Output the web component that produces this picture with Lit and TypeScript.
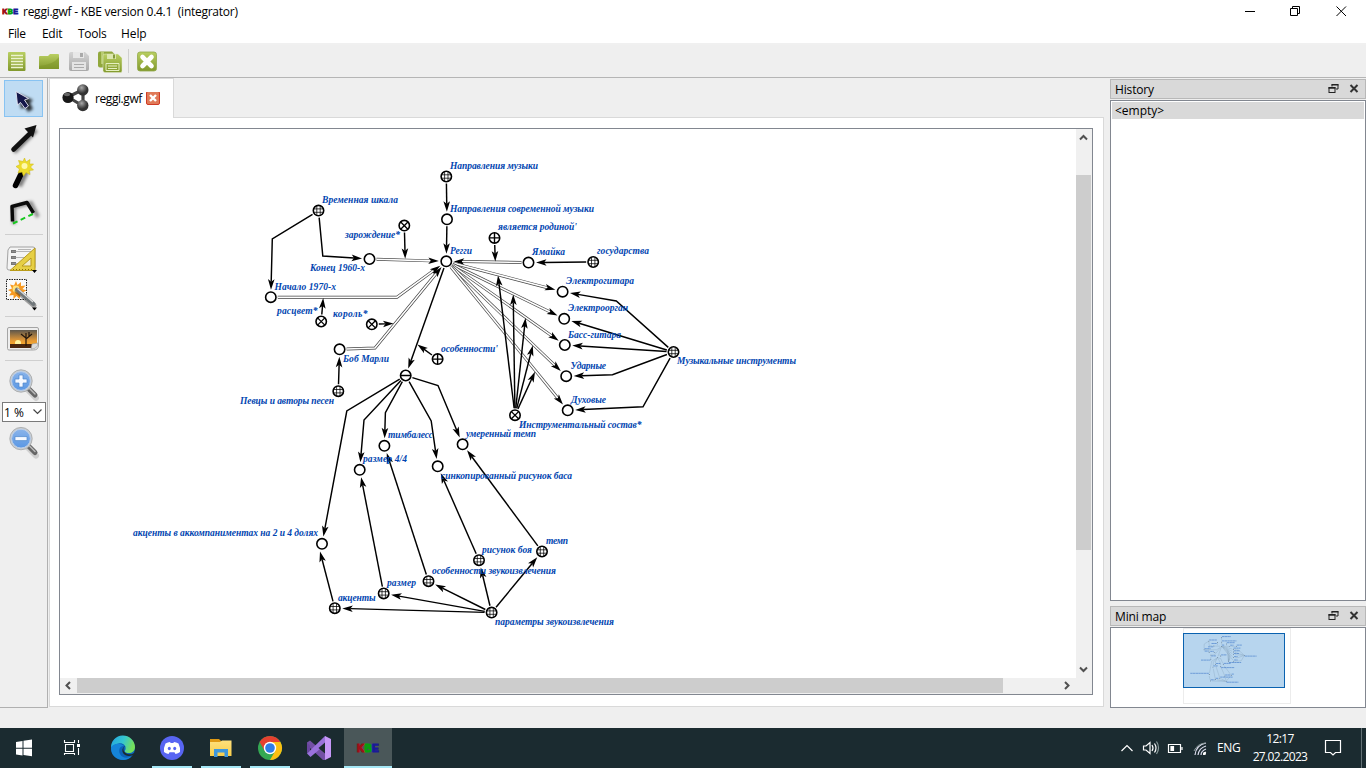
import { LitElement, html, svg, css } from "lit";
import { customElement } from "lit/decorators.js";

type Kind = "plain" | "grid" | "cross" | "plus" | "minus";
type Pt = [number, number];

const nodes: Record<string, [number, number, Kind]> = {
  dir: [446.3, 176.5, "grid"],
  modern: [447, 219.3, "plain"],
  reggae: [446.3, 261.3, "plain"],
  scale: [318.5, 210.6, "grid"],
  birth: [404.3, 225.6, "cross"],
  end60: [369.5, 259, "plain"],
  start70: [270.8, 297.2, "plain"],
  bloom: [321.2, 321.5, "cross"],
  king: [371.8, 324.3, "cross"],
  marley: [339.6, 349.3, "plain"],
  singers: [338.3, 391.2, "grid"],
  homeland: [494.5, 237.9, "plus"],
  jamaica: [528.5, 262.6, "plain"],
  states: [593.2, 262, "grid"],
  guitar: [562.6, 291.7, "plain"],
  organ: [564.2, 318.8, "plain"],
  bass: [564.8, 345, "plain"],
  drums: [566.2, 376.2, "plain"],
  winds: [567.7, 410.3, "plain"],
  instruments: [673.5, 352, "grid"],
  set: [515, 415.2, "cross"],
  features: [437.6, 359.1, "plus"],
  tuple: [405.7, 375.5, "minus"],
  timbales: [384.4, 445.8, "plain"],
  size44: [359.7, 469.8, "plain"],
  tempoMid: [462.6, 444.3, "plain"],
  synco: [437.7, 466.3, "plain"],
  accents24: [322, 543.8, "plain"],
  accents: [334.8, 608.2, "grid"],
  size: [383.7, 593.4, "grid"],
  sound: [428.5, 581.2, "grid"],
  beat: [479, 560.2, "grid"],
  tempo: [542, 551.5, "grid"],
  params: [491.6, 612.6, "grid"],
};

type Edge = [string, string | Pt, Pt[]?];
const edges: Edge[] = [
  ["dir", "modern"],
  ["modern", "reggae"],
  ["scale", "start70", [[272.3, 239]]],
  ["scale", "end60", [[322.8, 256]]],
  ["birth", [405.2, 258.8]],
  ["bloom", [323.2, 298]],
  ["king", [393.5, 323.6]],
  ["singers", "marley"],
  ["homeland", [495.3, 261.6]],
  ["states", "jamaica"],
  ["reggae", "tuple"],
  ["features", [417.4, 344.5]],
  ["set", [498, 275.5]],
  ["set", [513.2, 294.5]],
  ["set", [525.5, 318]],
  ["set", [532.8, 345.5]],
  ["set", [535, 371.8]],
  ["instruments", "guitar", [[616.3, 301]]],
  ["instruments", "organ"],
  ["instruments", "bass"],
  ["instruments", "drums", [[612.5, 374.8]]],
  ["instruments", "winds", [[643, 406.8]]],
  ["tuple", "accents24", [[346.8, 411]]],
  ["tuple", "size44", [[364, 420]]],
  ["tuple", "timbales", [[385.4, 412.6]]],
  ["tuple", "synco", [[431.2, 421]]],
  ["tuple", "tempoMid", [[438, 385.5]]],
  ["accents", [320, 551.5]],
  ["size", "size44"],
  ["sound", "timbales"],
  ["beat", "synco"],
  ["tempo", "tempoMid"],
  ["params", "accents"],
  ["params", "size"],
  ["params", "sound"],
  ["params", "beat"],
  ["params", "tempo"],
];
const doubleEdges: Edge[] = [
  ["end60", "reggae"],
  ["start70", "reggae", [[397, 297.2]]],
  ["marley", "reggae", [[375, 348]]],
  ["jamaica", "reggae"],
  ["reggae", "guitar"],
  ["reggae", "organ"],
  ["reggae", "bass"],
  ["reggae", "drums"],
  ["reggae", "winds"],
];

const labels: [string, number, number, number][] = [
  ["Направления музыки", 450, 538, 169],
  ["Направления современной музыки", 450, 594, 212],
  ["Временная шкала", 322, 398, 203],
  ["зарождение*", 345, 400, 238],
  ["является родиной'", 498, 577, 230],
  ["Регги", 450, 472, 254],
  ["Ямайка", 532, 565, 255],
  ["государства", 597, 649, 254],
  ["Конец 1960-х", 310, 365, 271],
  ["Начало 1970-х", 274.5, 336, 290],
  ["расцвет*", 277, 317.5, 314],
  ["король*", 333, 367.5, 317],
  ["Боб Марли", 343, 389, 362],
  ["особенности'", 441, 498, 352],
  ["Певцы и авторы песен", 240, 334, 404],
  ["Электрогитара", 566, 634, 284],
  ["Электроорган", 568, 628, 311],
  ["Басс-гитара", 568, 621, 338],
  ["Ударные", 570.5, 606, 369],
  ["Духовые", 571, 606, 403],
  ["Музыкальные инструменты", 677, 796, 364],
  ["Инструментальный состав*", 519, 641.5, 428],
  ["умеренный темп", 466, 536, 437],
  ["тимбалесс", 388, 433, 438],
  ["размер 4/4", 363, 407, 462],
  ["синкопированный рисунок баса", 441, 572, 479],
  ["акценты в аккомпаниментах на 2 и 4 долях", 133, 318, 536],
  ["рисунок боя", 482, 532, 553],
  ["темп", 546, 568, 544],
  ["особенности звукоизвлечения", 432, 556, 574],
  ["размер", 387, 416, 586],
  ["акценты", 338, 375.5, 601],
  ["параметры звукоизвлечения", 495, 614, 625],
];

const toward = (a: Pt, b: Pt, d: number): Pt => {
  const l = Math.hypot(b[0] - a[0], b[1] - a[1]) || 1;
  return [a[0] + ((b[0] - a[0]) * d) / l, a[1] + ((b[1] - a[1]) * d) / l];
};
const str = (p: Pt[]) => p.map((q) => q.map((v) => v.toFixed(2)).join(",")).join(" ");

function route([from, to, bends = []]: Edge) {
  const s: Pt = [nodes[from][0], nodes[from][1]];
  const e: Pt = typeof to === "string" ? [nodes[to][0], nodes[to][1]] : to;
  const all: Pt[] = [s, ...bends, e];
  const n = all.length;
  const tip = toward(e, all[n - 2], typeof to === "string" ? 7.5 : 0);
  const base = toward(tip, all[n - 2], 8);
  const back = toward(tip, all[n - 2], 10.5);
  const dx = (back[0] - tip[0]) / 10.5;
  const dy = (back[1] - tip[1]) / 10.5;
  const w = 3.3;
  const arrow: Pt[] = [tip, [back[0] - dy * w, back[1] + dx * w], base, [back[0] + dy * w, back[1] - dx * w]];
  const line: Pt[] = [toward(s, all[1], 7), ...bends, base];
  return { line: str(line), arrow: str(arrow) };
}

const drawNode = ([x, y, k]: [number, number, Kind]) => svg`
  <g transform="translate(${x} ${y})" stroke="#000" fill="none">
    <circle r="5.2" fill="#fff" stroke-width="1.6"></circle>
    ${k === "grid" ? svg`<path d="M-1.700-5V5M1.700-5V5M-5-1.700H5M-5 1.700H5" stroke-width=".75"></path>` : null}
    ${k === "cross" ? svg`<path d="M-3.600-3.600 3.600 3.600M3.600-3.600-3.600 3.600" stroke-width="1.3"></path>` : null}
    ${k === "plus" ? svg`<path d="M0-5V5M-5 0H5" stroke-width="1.4"></path>` : null}
    ${k === "minus" ? svg`<path d="M-5 0H5" stroke-width="1.5"></path>` : null}
  </g>`;

const icon = (x: number, y: number, w: number, h: number, body: unknown) =>
  html`<svg width=${w} height=${h} viewBox="${x} ${y} ${w} ${h}">${body}</svg>`;

const magnifier = (y: number, plus: boolean) => svg`
  <g transform="translate(0 ${y})">
    <path d="M27 21 36 30" stroke="#0002" stroke-width="6" stroke-linecap="round"></path>
    <path d="M28 20 35 27" stroke="#666" stroke-width="5" stroke-linecap="round"></path>
    <path d="M29 20 35 26" stroke="#bbb" stroke-width="1.4" stroke-linecap="round"></path>
    <circle cx="21" cy="13" r="11.2" fill="#c9cdd0" stroke="#a3a6a8" stroke-width=".8"></circle>
    <circle cx="21" cy="13" r="9.4" fill="url(#lens)" stroke="#b9cdea" stroke-width="1"></circle>
    <path d=${plus ? "M19 7h4v4h4v4h-4v4h-4v-4h-4v-4h4z" : "M15 11h12v4h-12z"} fill="#f4f8ff" stroke="#4d86cc" stroke-width=".7"></path>
  </g>`;

const kbe = (x: number, y: number) => svg`
  <g font-family="Liberation Sans, sans-serif" font-weight="700" font-size="10" stroke-width="1.2">
    <text x=${x} y=${y} fill="#a01018" stroke="#a01018" textLength="7">K</text>
    <text x=${x + 7.5} y=${y} fill="#08a010" stroke="#08a010" textLength="7">B</text>
    <text x=${x + 15} y=${y} fill="#1a1a98" stroke="#1a1a98" textLength="6">E</text>
  </g>`;

const dockIcons = () => icon(0, 0, 34, 12, svg`
  <path d="M4 3.500V1.500h6v4.500H8" fill="none" stroke="#222"></path><path d="M3.500 1.750h7" stroke="#222" stroke-width="1.500"></path>
  <rect x="1" y="4.500" width="6" height="5" fill="none" stroke="#222"></rect><path d="M.5 5h7" stroke="#222" stroke-width="1.500"></path>
  <path d="M22.500 2 29.500 9M29.500 2 22.500 9" stroke="#333" stroke-width="2"></path>`);

@customElement("app-root")
export class AppRoot extends LitElement {
  static styles = css`
    :host { display: block; width: 1366px; height: 768px; overflow: hidden; font: 12px "Open Sans", "Noto Sans", sans-serif; color: #000; }
    * { box-sizing: border-box; }
    svg { display: block; flex: none; }
    .app { height: 768px; display: flex; flex-direction: column; background: #efefef; }
    .title { height: 24px; background: #fff; display: flex; align-items: center; padding: 0 19px 0 2px; }
    .title .name { margin-left: 3px; flex: 1; white-space: pre; letter-spacing: -0.26px; line-height: 22px; padding-bottom: 1px; }
    .menu { height: 21px; background: #fff; border-bottom: 2px solid #f0f0f0; display: flex; padding-left: 8px; line-height: 19px; letter-spacing: -0.3px; }
    .menu .m1 { width: 34px; } .menu .m2 { width: 36px; } .menu .m3 { width: 43px; }
    .menu .m4 { letter-spacing: -0.1px; }
    .tools { height: 33px; border-bottom: 1px solid #b5b5b5; }
    .main { height: 630px; display: flex; }
    .left { width: 48px; border-right: 1px solid #b0b0b0; border-bottom: 1px solid #b0b0b0; display: flex; flex-direction: column; padding-top: 2px; }
    .combo { margin-left: 2px; width: 44px; height: 20px; border: 1px solid #7a7a7a; background: #fff; display: flex; align-items: center; justify-content: space-between; padding: 0 2px 0 1px; white-space: nowrap; }
    .center { width: 1056px; padding-left: 1px; display: flex; flex-direction: column; }
    .tabs { height: 40px; display: flex; }
    .tab { width: 125px; background: #fff; border: 1px solid #d9d9d9; border-bottom: 0; display: flex; align-items: center; padding-left: 10px; letter-spacing: -0.42px; }
    .tab .label { width: 51px; margin-left: 5px; }
    .rest { flex: 1; border-bottom: 1px solid #d9d9d9; }
    .pane { height: 589px; background: #fff; border: 1px solid #d9d9d9; border-top: 0; padding: 10px; padding-left: 9px; }
    .frame { width: 1034px; height: 567px; border: 1px solid #828790; display: grid; grid-template-columns: 1016px 16px; grid-template-rows: 549px 16px; background: #f0f0f0; }
    .graph { background: #fff; }
    .lbl { font: italic bold 9.5px "Liberation Serif", serif; fill: #0044b0; }
    .docks { width: 262px; padding: 1px 0 0 6px; display: flex; flex-direction: column; }
    .head { height: 20px; border: 1px solid #b8b8b8; background: #d9d9d9; display: flex; align-items: center; justify-content: space-between; padding: 0 3px 0 4px; letter-spacing: -0.15px; }
    .list { margin-top: 1px; height: 501px; border: 1px solid #828790; background: #fff; padding: 1px; }
    .row { height: 17px; background: #d9d9d9; line-height: 18px; padding-left: 3px; }
    .head2 { margin-top: 5px; }
    .map { margin-top: 1px; height: 81px; border: 1px solid #828790; background: #fff; }
    .status { height: 20px; }
    .task { height: 40px; background: #1b2b30; display: flex; color: #fff; justify-content: space-between; }
    .tray { display: flex; }
    .lang { width: 31px; line-height: 40px; letter-spacing: -0.3px; }
    .clock { width: 72px; padding: 2px 8px 0 0; text-align: center; line-height: 18px; letter-spacing: -0.65px; }
  `;

  render() {
    return html`<div class="app">
      <div class="title">
        ${icon(0, 0, 18, 14, svg`<g transform="scale(.72 .68)">${kbe(0.5, 13)}</g>`)}
        <span class="name">reggi.gwf - KBE version 0.4.1  (integrator)</span>
        ${icon(1240, 2, 107, 18, svg`<path d="M1245 10.500h10M1290.500 7.500h7v7h-7zM1292.500 7.500v-2h7v7h-2M1336.500 5.500l9.500 9.500M1346 5.500l-9.500 9.500" fill="none" stroke="#000"></path>`)}
      </div>
      <div class="menu"><span class="m1">File</span><span class="m2">Edit</span><span class="m3">Tools</span><span class="m4">Help</span></div>
      <div class="tools">${this.toolbar()}</div>
      <div class="main">
        <div class="left">${this.palette()}</div>
        <div class="center">
          <div class="tabs">
            <div class="tab">
              ${icon(60, 83, 30, 30, svg`
                <defs><radialGradient id="ball" cx=".4" cy=".3"><stop offset="0" stop-color="#aaa"></stop><stop offset=".6" stop-color="#606060"></stop><stop offset="1" stop-color="#333"></stop></radialGradient></defs>
                <path d="M68 96 83 88.500V105z" fill="none" stroke="#444" stroke-width="3.200"></path>
                <circle cx="68" cy="96.500" r="5.600" fill="#181818"></circle><ellipse cx="67" cy="93.500" rx="3" ry="1.700" fill="#666"></ellipse>
                <circle cx="82.800" cy="89" r="5.700" fill="url(#ball)"></circle><circle cx="82.800" cy="104.500" r="5.700" fill="url(#ball)"></circle>`)}
              <span class="label">reggi.gwf</span>
              ${icon(146, 92, 14, 14, svg`<rect x="146.500" y="91.500" width="13" height="13" rx="1.500" fill="#e07a58" stroke="#d03a24"></rect><path d="M150 95l6 6M156 95l-6 6" stroke="#fff" stroke-width="2.400"></path>`)}
            </div>
            <div class="rest"></div>
          </div>
          <div class="pane"><div class="frame">
            ${this.graph()}
            ${icon(1076, 129, 16, 549, svg`<rect x="1076" y="175" width="15" height="375" fill="#cdcdcd"></rect><path d="M1080 139.500l3.500-3.500 3.500 3.500M1080 667.500l3.500 3.500 3.500-3.500" fill="none" stroke="#505050" stroke-width="2"></path>`)}
            ${icon(60, 678, 1016, 16, svg`<rect x="77" y="678" width="926" height="15" fill="#cdcdcd"></rect><path d="M70 682l-3.500 3.500 3.500 3.500M1065 682l3.500 3.500-3.500 3.500" fill="none" stroke="#505050" stroke-width="2"></path>`)}
            <span></span>
          </div></div>
        </div>
        <div class="docks">
          <div class="head"><span>History</span>${dockIcons()}</div>
          <div class="list"><div class="row">&lt;empty&gt;</div></div>
          <div class="head head2"><span>Mini map</span>${dockIcons()}</div>
          <div class="map">${this.minimap()}</div>
        </div>
      </div>
      <div class="status"></div>
      ${this.taskbar()}
    </div>`;
  }

  toolbar() {
    return icon(0, 45, 180, 32, svg`
      <defs>
        <linearGradient id="gr" x2="0" y2="1"><stop offset="0" stop-color="#b9cf62"></stop><stop offset="1" stop-color="#82992c"></stop></linearGradient>
        <linearGradient id="gy" x2="0" y2="1"><stop offset="0" stop-color="#d4d4d4"></stop><stop offset="1" stop-color="#a9a9a9"></stop></linearGradient>
      </defs>
      <rect x="8" y="52" width="17.500" height="19" rx="1" fill="url(#gr)"></rect>
      <path d="M11 55.500h12M11 58.500h12M11 61.500h12M11 64.500h12M11 67.500h12" stroke="#edf3cf" stroke-width="1.300"></path>
      <path d="M39 57q0-1 1-1h8l2-2h8q1 0 1 1v14H39z" fill="url(#gr)"></path><path d="M39 66q14-1 20-9v12H39z" fill="#7b9325" opacity=".45"></path>
      <path d="M71 52h14l4 4v13q0 2-2 2H71q-2 0-2-2V54q0-2 2-2z" fill="url(#gy)"></path>
      <path d="M73 52h11v6H73z" fill="#e8e8e8"></path><path d="M80 53h3v4h-3z" fill="#aaa"></path><path d="M72 62h14v8H72z" fill="#e4e4e4"></path><path d="M74 64.500h10M74 67.500h10" stroke="#aaa"></path>
      <path d="M100 51.500h12l3 3v13h-15q-2 0-2-2v-12q0-2 2-2z" fill="#91a83c"></path><path d="M101 52h3v12h-3z" fill="#b8cb70"></path>
      <path d="M105 54h13l4 4v13q0 1.500-1.500 1.500H105q-2 0-2-2V56q0-2 2-2z" fill="url(#gr)" stroke="#e3e9cd" stroke-width=".5"></path>
      <path d="M107 54h9v5h-9z" fill="#dce7af"></path><path d="M113 54.500h2v4h-2z" fill="#83993a"></path><path d="M106 63.500h13v7h-13z" fill="none" stroke="#e5efc0"></path><path d="M108 66h9M108 68.500h9" stroke="#e5efc0"></path>
      <path d="M128.500 49v24" stroke="#cfcfcf"></path>
      <rect x="137.500" y="52" width="19" height="19" rx="2.500" fill="url(#gr)" stroke="#93a94b" stroke-width=".8"></rect>
      <path d="M142.500 57l9 9M151.500 57l-9 9" stroke="#fff" stroke-width="4.600" stroke-linecap="round"></path>`);
  }

  palette() {
    return html`${icon(0, 80, 47, 322, svg`
      <defs>
        <linearGradient id="lens" x2="0" y2="1"><stop offset="0" stop-color="#8ab4ea"></stop><stop offset="1" stop-color="#5a97e4"></stop></linearGradient>
        <linearGradient id="sun" x2="0" y2="1"><stop offset="0" stop-color="#5c564c"></stop><stop offset=".6" stop-color="#e79a35"></stop><stop offset=".78" stop-color="#f6a62c"></stop><stop offset=".84" stop-color="#5a2c10"></stop></linearGradient>
        <filter id="soft" x="-50%" y="-50%" width="200%" height="200%"><feGaussianBlur stdDeviation="1.500"></feGaussianBlur></filter>
      </defs>
      <rect x="4.500" y="80.500" width="38" height="36" fill="#bfdcf3" stroke="#88c3f2"></rect>
      <path d="M19 94l2 15 4-2 3 5 5-3-3-6 3-3z" fill="#000c" filter="url(#soft)"></path>
      <path d="M16 91.500l1.500 13.500 3-2.500 4.500 6 3.500-2.500-4-6 4-1.500z" fill="#15184a" stroke="#e8e8f4" stroke-width=".9"></path>
      <path d="M14 152 36 130" stroke="#0007" stroke-width="5" filter="url(#soft)"></path>
      <path d="M13.500 149.500 30 133.500" stroke="#111" stroke-width="4.600" stroke-linecap="round"></path><path d="M36.500 125l-12 3.500 8.500 9z" fill="#111"></path>
      <path d="M19 186 27 170" stroke="#0007" stroke-width="6" filter="url(#soft)"></path>
      <path d="M15.500 185.500 22 172" stroke="#000" stroke-width="5.500" stroke-linecap="round"></path>
      <path d="M24.500 158l1.500 4 4-2.500-.5 4.500h4l-3 3 3 3-4.500.5 1 4-4-2-2.500 3.500-1.500-4-4 1 1.500-4-3.500-2.500 4-2-1.500-4 4.500 1z" fill="#eddc2c" stroke="#d0bd1a" stroke-width=".6"></path><circle cx="24.500" cy="166" r="3" fill="#fff9a8"></circle>
      <path d="M14 224V207l17-4 7 14" fill="none" stroke="#0006" stroke-width="4" filter="url(#soft)"></path>
      <path d="M12.500 221.500 12 206.500 27 202.500 33.500 213" fill="none" stroke="#0a0a0a" stroke-width="3.500" stroke-linejoin="round"></path><path d="M13 223.500 35 213" stroke="#18c820" stroke-width="2" stroke-dasharray="5 3.500"></path>
      <path d="M5 234.500h38M5 316.500h38M5 360.500h38" stroke="#cfcfcf"></path>
      <path d="M10 247h23q2 0 2 2v18q0 3-3 3H9q-2 0-2-2l1-18z" fill="#f4f4f4" stroke="#999" stroke-width=".9"></path>
      <path d="M11 250h5v3h-5zM11 256h5v3h-5zM11 262h5v3h-5z" fill="#777"></path><path d="M18 249.500h13M12 251.500h20M12 257.500h16M12 263.500h10" stroke="#999" stroke-width=".7"></path>
      <path d="M35 248v22.500H10z" fill="#e6cf45" stroke="#b99b19"></path><path d="M31 258v8h-9z" fill="#f1ecd0" stroke="#b99b19"></path><path d="M13 269.500h21" stroke="#8a7208" stroke-dasharray="1 2"></path>
      <path d="M32 270h5l-2.500 3zM32 307.500h5l-2.500 3z" fill="#000"></path>
      <rect x="6.500" y="279.500" width="20" height="20" fill="#fafafa" stroke="#222" stroke-dasharray="1.500 1"></rect>
      <path d="M16 281l1.500 4 3.500-3v4l4.500-.5-3 3.500 4 1.500-4 2 2 4-4-1.500-1 4-3-3-3 3v-4l-4.500.5 2.500-3.500-3.500-2 4-1.500-2-4 4 1z" fill="#f79a22"></path><circle cx="16" cy="289" r="3.400" fill="#ffe17a"></circle>
      <path d="M17 291 34 305.500" stroke="#0005" stroke-width="5" stroke-linecap="round"></path><path d="M17 289.500 33.500 304" stroke="#70777a" stroke-width="4" stroke-linecap="round"></path><path d="M17.500 288.500 33 302" stroke="#ddd" stroke-width="1.200"></path>
      <path d="M9 327.500h28q1.500 0 1.500 1.500v16q0 5-5 5H9q-1.500 0-1.500-1.500V329q0-1.500 1.500-1.500z" fill="#eee" stroke="#a5a5a5"></path>
      <path d="M10 330h27v14l-4 4H10z" fill="url(#sun)"></path><circle cx="18" cy="343" r="3" fill="#fff3a0"></circle><path d="M10 344h24l-2 4H10z" fill="#4a260f"></path><path d="M26 346v-8l-5-4M26 339l6-5M26 338v-5M29 336v-4" stroke="#20150c" fill="none" stroke-width="1.200"></path><path d="M31 349l1-5 6-1q0 6-7 6z" fill="#ddd" stroke="#999" stroke-width=".6"></path>
      ${magnifier(368, true)}`)}
      <div class="combo"><span>1 %</span>${icon(0, 0, 11, 8, svg`<path d="M1.500 1.500 5.500 5.500 9.500 1.500" fill="none" stroke="#444" stroke-width="1.200"></path>`)}</div>
      ${icon(0, 422, 47, 40, magnifier(425.6, false))}`;
  }

  graph() {
    return html`<svg class="graph" width="1016" height="549" viewBox="60 129 1016 549">
      ${doubleEdges.map((e) => {
        const r = route(e);
        return svg`<polyline points=${r.line} fill="none" stroke="#444" stroke-width="2.900"></polyline><polyline points=${r.line} fill="none" stroke="#fff" stroke-width="1.600"></polyline><polygon points=${r.arrow}></polygon>`;
      })}
      ${edges.map((e) => {
        const r = route(e);
        return svg`<polyline points=${r.line} fill="none" stroke="#000" stroke-width="1.450"></polyline><polygon points=${r.arrow}></polygon>`;
      })}
      ${Object.values(nodes).map(drawNode)}
      ${labels.map(([t, a, b, y]) => svg`<text class="lbl" x=${a} y=${y} textLength=${b - a}>${t}</text>`)}
    </svg>`;
  }

  minimap() {
    return icon(1111, 628, 254, 79, svg`
      <rect x="1183.500" y="628.500" width="107" height="75" fill="#fff" stroke="#ececec"></rect>
      <rect x="1183.500" y="633.500" width="101" height="54" fill="#b7d5ee" stroke="#0a62b0"></rect>
      <g transform="translate(1183 633) scale(.1) translate(-60 -129)">
        ${[...edges, ...doubleEdges].map((e) => svg`<polyline points=${route(e).line} fill="none" stroke="#6d8ba5" stroke-width="2.400"></polyline>`)}
        ${Object.values(nodes).map(([x, y]) => svg`<circle cx=${x} cy=${y} r="4" fill="#26384a"></circle>`)}
        ${labels.map(([, a, b, y]) => svg`<path d="M${a} ${y - 4}H${b}" stroke="#3a74c8" stroke-width="6" stroke-dasharray="24 3"></path>`)}
      </g>`);
  }

  taskbar() {
    return html`<div class="task">
      ${icon(0, 728, 400, 40, svg`
        <defs>
          <linearGradient id="edge" x1="0" y1="0" x2="1" y2=".3"><stop offset="0" stop-color="#22a3e0"></stop><stop offset=".55" stop-color="#35c6d0"></stop><stop offset="1" stop-color="#75e05a"></stop></linearGradient>
          <linearGradient id="fold" x2="0" y2="1"><stop offset="0" stop-color="#ffe07c"></stop><stop offset="1" stop-color="#f9ce4b"></stop></linearGradient>
        </defs>
        <path d="M16 742l6.500-1v6.700H16zM23.500 740.800l8.500-1.200v8.100h-8.500zM16 748.700h6.500v6.700l-6.500-1zM23.500 748.700h8.500v7.600l-8.500-1.200z" fill="#fff"></path>
        <path d="M64.500 740v2.500h10V740M65.500 744.500h8v7h-8zM64.500 755v-1.500h10v1.500M78.500 740v3M78.500 748v7" fill="none" stroke="#fff" stroke-width="1.100"></path><path d="M77 744h3v3h-3z" fill="#fff"></path>
        <circle cx="123" cy="748" r="12" fill="#0c62b8"></circle>
        <path d="M111 748a12 12 0 0 1 24-1c0 4-3 6-6 6-4 0-5-1.500-3.500-3.500 1-4-3-7-7-6-4 .5-6.500 2.500-7.500 4.500z" fill="url(#edge)"></path>
        <path d="M111 748c1-4 9-6 13-2-4-.5-6 4-4 8s7 4.500 11.500 2.500c-3 3-8 4.500-13 2.500-5-2-7.500-6-7.500-11z" fill="#1584d8"></path>
        <path d="M125.500 746c-3.500 1.500-2.500 6.500 2 8 3 .8 5 .2 6.500-1l1.500 1-1.500 2-1-1c-3 1.500-8 1.500-10-2-1.500-3 0-6.500 2.500-7z" fill="#1b2b30"></path>
        <circle cx="172" cy="748" r="12" fill="#5865f2"></circle>
        <path d="M165.500 743.500q2.500-1.500 4.500-1.500l.7 1h2.600l.7-1q2 0 4.500 1.500 2 4 1.500 8.500-2 1.700-4.500 2l-1-1.700h-5l-1 1.700q-2.500-.3-4.500-2-.5-4.500 1.500-8.500z" fill="#fff"></path><ellipse cx="169.300" cy="748.500" rx="1.500" ry="1.700" fill="#5865f2"></ellipse><ellipse cx="174.700" cy="748.500" rx="1.500" ry="1.700" fill="#5865f2"></ellipse>
        <path d="M210 739h9l2 2v4h-11z" fill="#e09a14"></path><path d="M210 742h10l2-1.500h9.500V756H210z" fill="url(#fold)"></path><path d="M214 757v-8h14v8h-3.500v-4.500h-7V757z" fill="#3f97dc"></path>
        <circle cx="270" cy="748" r="12" fill="#34a853"></circle>
        <path d="M259.600 742A12 12 0 0 1 280.400 742H270l-5.200 9z" fill="#e5402f"></path><path d="M280.400 742A12 12 0 0 1 270 760l5.200-9-5.200-9z" fill="#fbbf12"></path>
        <circle cx="270" cy="748" r="6.200" fill="#fff"></circle><circle cx="270" cy="748" r="4.800" fill="#2f7de8"></circle>
        <path d="M307 742.500l3-2 4 3.500 11 9v7l-2 0-13-12v0l-3 4z" fill="#7350a6"></path>
        <path d="M307 742.500l3 3v5l-3 3z" fill="#6a45a0"></path>
        <path d="M307 753.500l18-17.500 3 6-8 7-9.500 8z" fill="#9a72dc"></path>
        <path d="M325 736l6 3v18l-6 3z" fill="#c697f8"></path><path d="M318.500 748l6.500-5.500v11z" fill="#1b2b30"></path>
        <rect x="344" y="728" width="48" height="40" fill="#4a5759"></rect>
        ${kbe(357, 752)}
        <path d="M152 767h40M201 767h40M250 767h40M344 767h48" stroke="#a5e7f5" stroke-width="2"></path>`)}
      <div class="tray">
        ${icon(1115, 728, 102, 40, svg`
          <g fill="none" stroke="#fff" stroke-width="1.200">
          <path d="M1121.500 751l5.500-5.500 5.500 5.500"></path>
          <path d="M1143.500 746v4h2.500l4 3.500v-11l-4 3.500zM1152 745q2 3 0 6M1154.500 743.500q3 4.500 0 9"></path><path d="M1156.500 741.500q4 6 0 12.500" stroke="#899"></path>
          <path d="M1168.500 744.500h12v8h-12zM1182 747v3"></path><path d="M1171 746.500v4h2.500v-4z" fill="#fff"></path>
          <path d="M1195 755q1-10 11-12M1198 755q1-7 8-9M1201 755q0-4 5-6" stroke="#dde"></path><path d="M1203.500 755q0-2 2.500-3"></path></g><path d="M1194 751q3-7 11-8" fill="none" stroke="#899"></path><circle cx="1204.500" cy="753.500" r="1.500" fill="#fff"></circle>`)}
        <span class="lang">ENG</span>
        <div class="clock">12:17<br>27.02.2023</div>
        ${icon(1320, 728, 46, 40, svg`<path d="M1325.500 740.500h15v12h-5l-2.500 2.500-2.500-2.500h-5z" fill="none" stroke="#fff" stroke-width="1.200"></path><path d="M1361.500 728v40" stroke="#627074"></path>`)}
      </div>
    </div>`;
  }
}
